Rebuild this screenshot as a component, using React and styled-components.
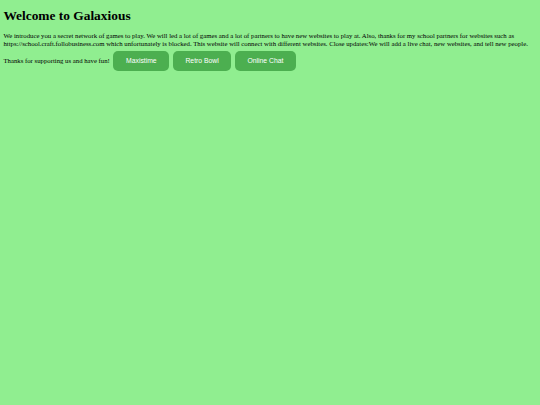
import styled, { createGlobalStyle } from 'styled-components';

const GlobalStyle = createGlobalStyle`
  html, body {
    margin: 0;
    background: #90ee90;
  }
  body {
    padding: 3.4px;
    font-family: "Liberation Serif", "Times New Roman", serif;
  }
`;

const Title = styled.h1`
  font-size: 13.4px;
  font-weight: bold;
  margin: 4.6px 0 8.4px;
  color: #000;
`;

const Text = styled.p`
  font-size: 6.75px;
  line-height: 7.4px;
  margin: 0 0 3.6px;
  color: #000;
`;

const Actions = styled.div`
  display: flex;
  align-items: center;
  font-size: 6.75px;
`;

const Button = styled.button`
  background: #4caf50;
  color: #fff;
  border: none;
  border-radius: 5px;
  padding: 6.3px 12.6px;
  margin: 0 0 0 3.6px;
  font-family: "Liberation Sans", Arial, sans-serif;
  font-size: 6.8px;
  line-height: 7.5px;
  cursor: pointer;
`;

export default function App() {
  return (
    <>
      <GlobalStyle />
      <Title>Welcome to Galaxious</Title>
      <Text>
        We introduce you a secret network of games to play. We will led a lot of games and a lot of partners to have new
        websites to play at. Also, thanks for my school partners for websites such as https://school.craft.follobusiness.com
        which unfortunately is blocked. This website will connect with different websites. Close updates:We will add a live
        chat, new websites, and tell new people.
      </Text>
      <Actions>
        <span>Thanks for supporting us and have fun!</span>
        <Button>Maxistime</Button>
        <Button>Retro Bowl</Button>
        <Button>Online Chat</Button>
      </Actions>
    </>
  );
}
